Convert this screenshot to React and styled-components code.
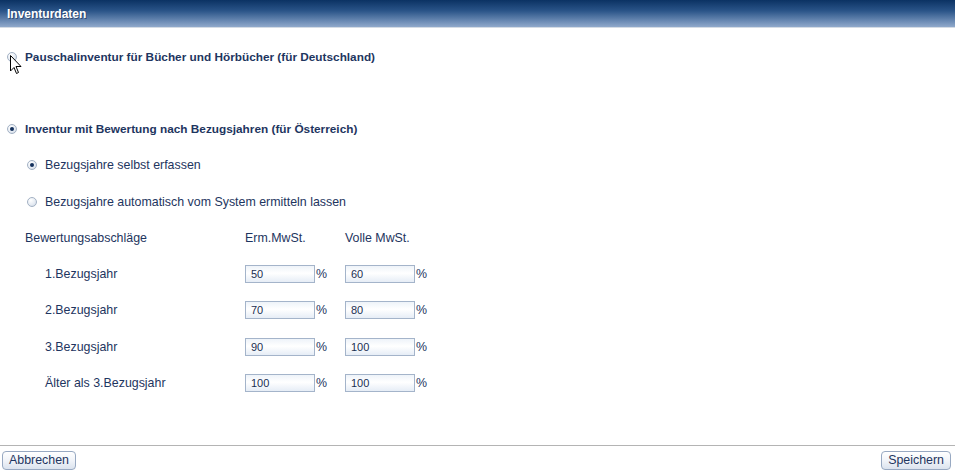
import React from 'react';
import styled, { createGlobalStyle } from 'styled-components';

const GlobalStyle = createGlobalStyle`
  html, body {
    margin: 0;
    padding: 0;
    background: #ffffff;
  }
  body {
    font-family: "Liberation Sans", Arial, sans-serif;
    font-size: 12.4px;
    color: #1e3560;
  }
`;

const Page = styled.div`
  position: relative;
  display: flex;
  flex-direction: column;
  height: 100vh;
  overflow: hidden;
`;

const TitleBar = styled.div`
  height: 27px;
  display: flex;
  align-items: center;
  padding-left: 7px;
  background: linear-gradient(to bottom, #0b3263 0%, #2a5488 40%, #6e8db6 80%, #90a9cb 100%);
  border-bottom: 1px solid #d4dbe4;
  color: #ffffff;
  font-weight: bold;
  font-size: 12px;
  text-shadow: 1px 1px 0 rgba(20, 40, 80, 0.6);
`;

const Body = styled.div`
  padding: 11px 0 0 0;
  display: flex;
  flex-direction: column;
`;

const Row = styled.div`
  height: 36.2px;
  display: flex;
  align-items: center;
  padding-left: ${(p) => p.indent || 0}px;
  font-weight: ${(p) => (p.bold ? 'bold' : 'normal')};
  font-size: ${(p) => (p.bold ? '11.8px' : '12.4px')};
`;

const Spacer = styled.div`
  height: 36px;
`;

const RadioDot = styled.span`
  width: 10px;
  height: 10px;
  box-sizing: border-box;
  border-radius: 50%;
  border: 1px solid #a3b1c4;
  background: radial-gradient(circle at 35% 30%, #ffffff 0%, #e4eaf2 60%, #c9d3e0 100%);
  margin-right: 8px;
  display: flex;
  align-items: center;
  justify-content: center;
  flex: none;
  &::after {
    content: '';
    width: 4px;
    height: 4px;
    border-radius: 50%;
    background: ${(p) => (p.checked ? '#14305c' : 'transparent')};
  }
`;

const Table = styled.div`
  display: grid;
  grid-template-columns: 220px 100px 100px;
  grid-auto-rows: 36.3px;
  align-items: center;
  padding-left: 25px;
`;

const Cell = styled.div`
  padding-left: ${(p) => p.indent || 0}px;
  display: flex;
  align-items: center;
`;

const Field = styled.input`
  width: 70px;
  height: 18px;
  box-sizing: border-box;
  border: 1px solid #a4b4ca;
  padding: 0 0 0 5px;
  margin: 0;
  font-family: "Liberation Sans", Arial, sans-serif;
  font-size: 11px;
  color: #1b2f52;
  background: linear-gradient(to bottom, #eef3f9 0%, #ffffff 45%, #e6edf6 100%);
  outline: none;
`;

const Unit = styled.span`
  margin-left: 1px;
`;

const Footer = styled.div`
  margin-top: auto;
  border-top: 1px solid #b4b4b4;
  display: flex;
  justify-content: space-between;
  padding: 5px 4px 3px 2px;
`;

const Button = styled.button`
  height: 19px;
  padding: 0 6px;
  border: 1px solid #98a9c2;
  border-radius: 4px;
  background: linear-gradient(to bottom, #ffffff 0%, #f1f4f9 50%, #dbe3ee 100%);
  font-family: "Liberation Sans", Arial, sans-serif;
  font-size: 12.4px;
  color: #1e3560;
  line-height: 17px;
  cursor: default;
`;

const Pointer = styled.svg`
  position: absolute;
  left: 10px;
  top: 55px;
`;

const rows = [
  { label: '1.Bezugsjahr', erm: '50', voll: '60' },
  { label: '2.Bezugsjahr', erm: '70', voll: '80' },
  { label: '3.Bezugsjahr', erm: '90', voll: '100' },
  { label: 'Älter als 3.Bezugsjahr', erm: '100', voll: '100' },
];

const App = () => (
  <Page>
    <GlobalStyle />
    <TitleBar>Inventurdaten</TitleBar>
    <Body>
      <Row bold indent={7}>
        <RadioDot />
        Pauschalinventur für Bücher und Hörbücher (für Deutschland)
      </Row>
      <Spacer />
      <Row bold indent={7}>
        <RadioDot checked />
        Inventur mit Bewertung nach Bezugsjahren (für Österreich)
      </Row>
      <Row indent={27}>
        <RadioDot checked />
        Bezugsjahre selbst erfassen
      </Row>
      <Row indent={27}>
        <RadioDot />
        Bezugsjahre automatisch vom System ermitteln lassen
      </Row>
      <Table>
        <Cell>Bewertungsabschläge</Cell>
        <Cell>Erm.MwSt.</Cell>
        <Cell>Volle MwSt.</Cell>
        {rows.map((r) => (
          <React.Fragment key={r.label}>
            <Cell indent={20}>{r.label}</Cell>
            <Cell>
              <Field defaultValue={r.erm} />
              <Unit>%</Unit>
            </Cell>
            <Cell>
              <Field defaultValue={r.voll} />
              <Unit>%</Unit>
            </Cell>
          </React.Fragment>
        ))}
      </Table>
    </Body>
    <Footer>
      <Button>Abbrechen</Button>
      <Button>Speichern</Button>
    </Footer>
    <Pointer width="12" height="20" viewBox="0 0 12 20">
      <path d="M0.5 0.5 L0.5 16 L4 12.5 L6.5 18.5 L8.5 17.5 L6 11.5 L11 11.5 Z" fill="#ffffff" stroke="#000000" strokeWidth="1" strokeLinejoin="miter" />
    </Pointer>
  </Page>
);

export default App;
